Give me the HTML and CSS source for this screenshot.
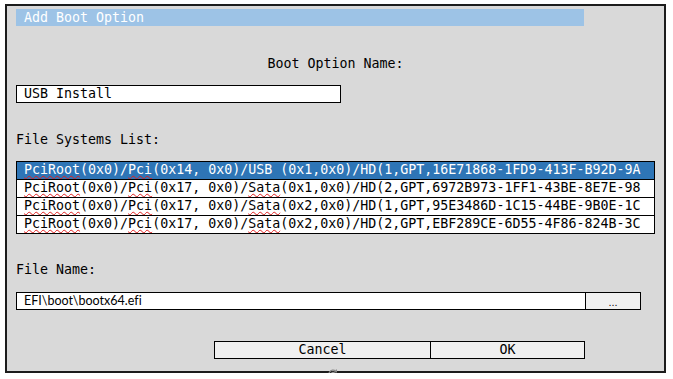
FILE: index.html
```html
<!DOCTYPE html>
<html lang="en">
<head>
  <meta charset="UTF-8" />
  <title>Add Boot Option</title>
  <link rel="stylesheet" href="styles.css">
</head>
<body>
  <div class="dialog">
    <div class="title-bar">Add Boot Option</div>

    <div class="field-label centered">Boot Option Name:</div>
    <div class="text-box name-box">USB Install</div>

    <div class="field-label list-label">File Systems List:</div>
    <div class="fs-list">
      <div class="fs-row selected"><span class="spell">PciRoot</span>(0x0)/<span class="spell">Pci</span>(0x14, 0x0)/USB (0x1,0x0)/HD(1,GPT,16E71868-1FD9-413F-B92D-9A</div>
      <div class="fs-row"><span class="spell">PciRoot</span>(0x0)/<span class="spell">Pci</span>(0x17, 0x0)/<span class="spell">Sata</span>(0x1,0x0)/HD(2,GPT,6972B973-1FF1-43BE-8E7E-98</div>
      <div class="fs-row"><span class="spell">PciRoot</span>(0x0)/<span class="spell">Pci</span>(0x17, 0x0)/<span class="spell">Sata</span>(0x2,0x0)/HD(1,GPT,95E3486D-1C15-44BE-9B0E-1C</div>
      <div class="fs-row"><span class="spell">PciRoot</span>(0x0)/<span class="spell">Pci</span>(0x17, 0x0)/<span class="spell">Sata</span>(0x2,0x0)/HD(2,GPT,EBF289CE-6D55-4F86-824B-3C</div>
    </div>

    <div class="field-label file-label">File Name:</div>
    <div class="file-row">
      <div class="text-box file-box">EFI\boot\bootx64.efi</div>
      <button class="browse">...</button>
    </div>

    <div class="actions">
      <button class="btn cancel">Cancel</button>
      <button class="btn ok">OK</button>
    </div>

    <svg class="busy" width="12" height="12" viewBox="0 0 12 12">
      <path d="M10 6a4 4 0 1 1-1.2-2.8" fill="none" stroke="#888" stroke-width="1.2"/>
      <path d="M9.4 1.6v2.2H7.2" fill="none" stroke="#888" stroke-width="1.2"/>
      <circle cx="6" cy="6" r="1.8" fill="none" stroke="#aaa" stroke-width="1"/>
    </svg>
  </div>
</body>
</html>
```

FILE: styles.css
```css
html, body {
  margin: 0;
  padding: 0;
  background-color: #fff;
  font-family: "DejaVu Sans Mono", "Liberation Mono", monospace;
  font-size: 13.3px;
  color: #000;
}

.dialog {
  position: relative;
  box-sizing: border-box;
  width: 661px;
  height: 369px;
  margin: 4px 0 0 5px;
  padding: 0 0 0 9px;
  border: 2px solid #1c1c1c;
  background-color: #d9d9d9;
}

.title-bar {
  width: 568px;
  height: 17px;
  margin-top: 3px;
  padding-left: 8px;
  box-sizing: border-box;
  background-color: #9dc3e6;
  color: #fff;
  line-height: 17px;
}

.field-label {
  height: 18px;
  line-height: 18px;
}

.centered {
  margin: 29px 9px 0 0;
  text-align: center;
}

.list-label {
  margin-top: 28px;
}

.file-label {
  margin-top: 27px;
}

.text-box {
  box-sizing: border-box;
  height: 18px;
  padding-left: 7px;
  border: 1px solid #000;
  background-color: #fff;
  line-height: 16px;
  white-space: nowrap;
  overflow: hidden;
}

.name-box {
  width: 325px;
  margin-top: 12px;
}

.fs-list {
  width: 637px;
  margin-top: 12px;
  border: 1px solid #000;
  background-color: #fff;
}

.fs-row {
  height: 17px;
  padding-left: 7px;
  line-height: 16px;
  white-space: nowrap;
  overflow: hidden;
}

.fs-row + .fs-row {
  border-top: 1px solid #000;
}

.fs-row.selected {
  background-color: #2e75b6;
  color: #fff;
}

.spell {
  text-decoration: underline wavy #e02020;
  text-decoration-thickness: 1px;
  text-underline-offset: 1px;
}

.file-row {
  display: flex;
  margin-top: 13px;
}

.file-box {
  width: 570px;
  font-family: "Lato", "Noto Sans", sans-serif;
  font-size: 12.5px;
  font-variant-ligatures: none;
}

.browse,
.btn {
  box-sizing: border-box;
  height: 18px;
  margin: 0 0 0 -1px;
  padding: 0;
  border: 1px solid #000;
  border-radius: 0;
  background-color: #f0f0f0;
  font-family: "DejaVu Sans Mono", "Liberation Mono", monospace;
  font-size: 13.3px;
  line-height: 16px;
  color: #000;
}

.browse {
  width: 56px;
  font-family: "Liberation Sans", sans-serif;
  font-size: 11px;
  line-height: 18px;
  color: #111;
}

.actions {
  display: flex;
  margin: 31px 0 0 198px;
}

.btn.cancel {
  width: 217px;
  margin-left: 0;
}

.btn.ok {
  width: 155px;
}

.busy {
  position: absolute;
  left: 320px;
  bottom: -9px;
}
```
